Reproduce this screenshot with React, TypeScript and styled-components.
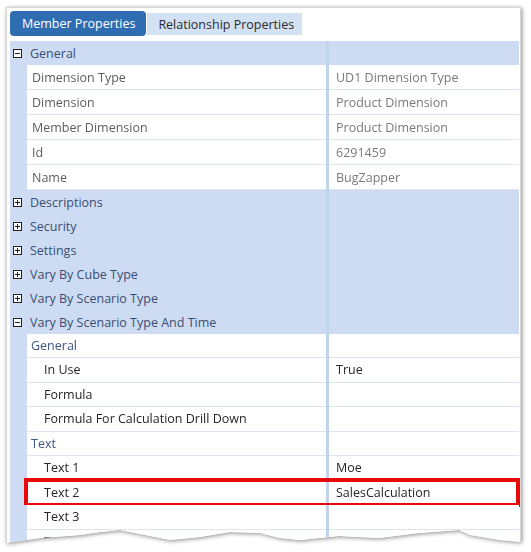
import React from "react";
import styled, { createGlobalStyle } from "styled-components";

const GlobalStyle = createGlobalStyle`
  html, body {
    margin: 0;
    padding: 0;
    background: #ffffff;
  }
  body {
    font-family: "Open Sans", "Noto Sans", sans-serif;
    font-size: 12px;
  }
`;

const Page = styled.div`
  padding: 7px 10px 0 6px;
  width: 531px;
  height: 552px;
  box-sizing: border-box;
`;

const Shadow = styled.div`
  filter: drop-shadow(1px 1px 2px rgba(0, 0, 0, 0.45));
`;

// Card with a ragged, torn-paper bottom edge
const Card = styled.div`
  background: #ffffff;
  height: 541px;
  overflow: hidden;
  box-sizing: border-box;
  padding: 3px 1px 0 3px;
  border: 1px solid #d6d6d6;
  clip-path: polygon(
    0 0,
    100% 0,
    100% 535px,
    494px 533px,
    464px 528px,
    453px 523px,
    413px 526px,
    373px 531px,
    333px 529px,
    294px 533px,
    274px 531px,
    254px 526px,
    224px 525px,
    194px 530px,
    164px 533px,
    134px 527px,
    114px 523px,
    94px 525px,
    74px 528px,
    34px 531px,
    0 536px
  );
`;

const TabBar = styled.div`
  display: flex;
  align-items: flex-end;
  height: 25px;
`;

const Tab = styled.div<{ $active?: boolean }>`
  display: flex;
  align-items: center;
  height: ${(p) => (p.$active ? "25px" : "22px")};
  padding: ${(p) => (p.$active ? "0 11px 0 12px" : "0 8px 0 11px")};
  margin-right: 1px;
  box-sizing: border-box;
  font-size: 12.5px;
  color: ${(p) => (p.$active ? "#ffffff" : "#2b2b2b")};
  background: ${(p) => (p.$active ? "#2f6db3" : "#d3e1f5")};
  border-radius: ${(p) => (p.$active ? "4px" : "0")};
  margin-bottom: ${(p) => (p.$active ? "0" : "1px")};
`;

const Grid = styled.div`
  margin-top: 5px;
  display: flex;
  flex-direction: column;
`;

const Row = styled.div<{ $header?: boolean; $h: number }>`
  display: grid;
  grid-template-columns: 17px 299px 3px 1fr;
  height: ${(p) => p.$h}px;
  background: ${(p) => (p.$header ? "#cddcf3" : "#ffffff")};
  position: relative;
`;

const Gutter = styled.div`
  background: #cddcf3;
  display: flex;
  align-items: center;
  padding-left: 3px;
`;

const Divider = styled.div`
  background: #c2d3ec;
`;

const Cell = styled.div<{ $header?: boolean; $indent: number; $tone: string }>`
  display: flex;
  align-items: center;
  padding-left: ${(p) => p.$indent}px;
  color: ${(p) => p.$tone};
  font-size: 12.5px;
  white-space: nowrap;
  overflow: ${(p) => (p.$header ? "visible" : "hidden")};
  box-sizing: border-box;
  border-bottom: ${(p) => (p.$header ? "none" : "1px solid #dbe4f2")};
`;

const Toggle = styled.span`
  width: 7px;
  height: 7px;
  border: 1px solid #1f1f1f;
  display: inline-flex;
  align-items: center;
  justify-content: center;
  position: relative;
  background: #ffffff;
`;

const Bar = styled.span<{ $vertical?: boolean }>`
  position: absolute;
  background: #1f1f1f;
  width: ${(p) => (p.$vertical ? "1px" : "5px")};
  height: ${(p) => (p.$vertical ? "5px" : "1px")};
`;

const Highlight = styled.div`
  position: absolute;
  left: 14px;
  right: -1px;
  top: -3px;
  bottom: -2px;
  border: 4px solid #e8090c;
  pointer-events: none;
`;

type Item =
  | { kind: "header"; label: string; open: boolean }
  | {
      kind: "row";
      label: string;
      value?: string;
      indent: number;
      labelTone: string;
      valueTone: string;
      h: number;
      mark?: boolean;
    };

const GRAY = "#5d5d5d";
const LIGHT = "#7a7a7a";
const DARK = "#262626";
const GROUP = "#3d5782";
const HEAD = "#3b4e72";

const items: Item[] = [
  { kind: "header", label: "General", open: true },
  { kind: "row", label: "Dimension Type", value: "UD1 Dimension Type", indent: 5, labelTone: GRAY, valueTone: LIGHT, h: 25 },
  { kind: "row", label: "Dimension", value: "Product Dimension", indent: 5, labelTone: GRAY, valueTone: LIGHT, h: 25 },
  { kind: "row", label: "Member Dimension", value: "Product Dimension", indent: 5, labelTone: GRAY, valueTone: LIGHT, h: 25 },
  { kind: "row", label: "Id", value: "6291459", indent: 5, labelTone: GRAY, valueTone: LIGHT, h: 25 },
  { kind: "row", label: "Name", value: "BugZapper", indent: 5, labelTone: GRAY, valueTone: LIGHT, h: 25 },
  { kind: "header", label: "Descriptions", open: false },
  { kind: "header", label: "Security", open: false },
  { kind: "header", label: "Settings", open: false },
  { kind: "header", label: "Vary By Cube Type", open: false },
  { kind: "header", label: "Vary By Scenario Type", open: false },
  { kind: "header", label: "Vary By Scenario Type And Time", open: true },
  { kind: "row", label: "General", indent: 4, labelTone: GROUP, valueTone: DARK, h: 24 },
  { kind: "row", label: "In Use", value: "True", indent: 17, labelTone: DARK, valueTone: DARK, h: 24.5 },
  { kind: "row", label: "Formula", indent: 17, labelTone: DARK, valueTone: DARK, h: 24.5 },
  { kind: "row", label: "Formula For Calculation Drill Down", indent: 17, labelTone: DARK, valueTone: DARK, h: 24.5 },
  { kind: "row", label: "Text", indent: 4, labelTone: GROUP, valueTone: DARK, h: 24.5 },
  { kind: "row", label: "Text 1", value: "Moe", indent: 17, labelTone: DARK, valueTone: DARK, h: 24.5 },
  { kind: "row", label: "Text 2", value: "SalesCalculation", indent: 17, labelTone: DARK, valueTone: DARK, h: 24.5, mark: true },
  { kind: "row", label: "Text 3", indent: 17, labelTone: DARK, valueTone: DARK, h: 24.5 },
  { kind: "row", label: "Text 4", indent: 17, labelTone: DARK, valueTone: DARK, h: 24.5 },
];

function Expander({ open }: { open: boolean }) {
  return (
    <Toggle>
      <Bar />
      {!open && <Bar $vertical />}
    </Toggle>
  );
}

export default function App() {
  return (
    <>
      <GlobalStyle />
      <Page>
        <Shadow>
          <Card>
            <TabBar>
              <Tab $active>Member Properties</Tab>
              <Tab>Relationship Properties</Tab>
            </TabBar>
            <Grid>
              {items.map((it, i) =>
                it.kind === "header" ? (
                  <Row key={i} $header $h={24}>
                    <Gutter>
                      <Expander open={it.open} />
                    </Gutter>
                    <Cell $header $indent={3} $tone={HEAD}>
                      {it.label}
                    </Cell>
                    <Divider />
                    <Cell $header $indent={0} $tone={HEAD} />
                  </Row>
                ) : (
                  <Row key={i} $h={it.h}>
                    <Gutter />
                    <Cell $indent={it.indent} $tone={it.labelTone}>
                      {it.label}
                    </Cell>
                    <Divider />
                    <Cell $indent={7} $tone={it.valueTone}>
                      {it.value ?? ""}
                    </Cell>
                    {it.mark && <Highlight />}
                  </Row>
                )
              )}
            </Grid>
          </Card>
        </Shadow>
      </Page>
    </>
  );
}
